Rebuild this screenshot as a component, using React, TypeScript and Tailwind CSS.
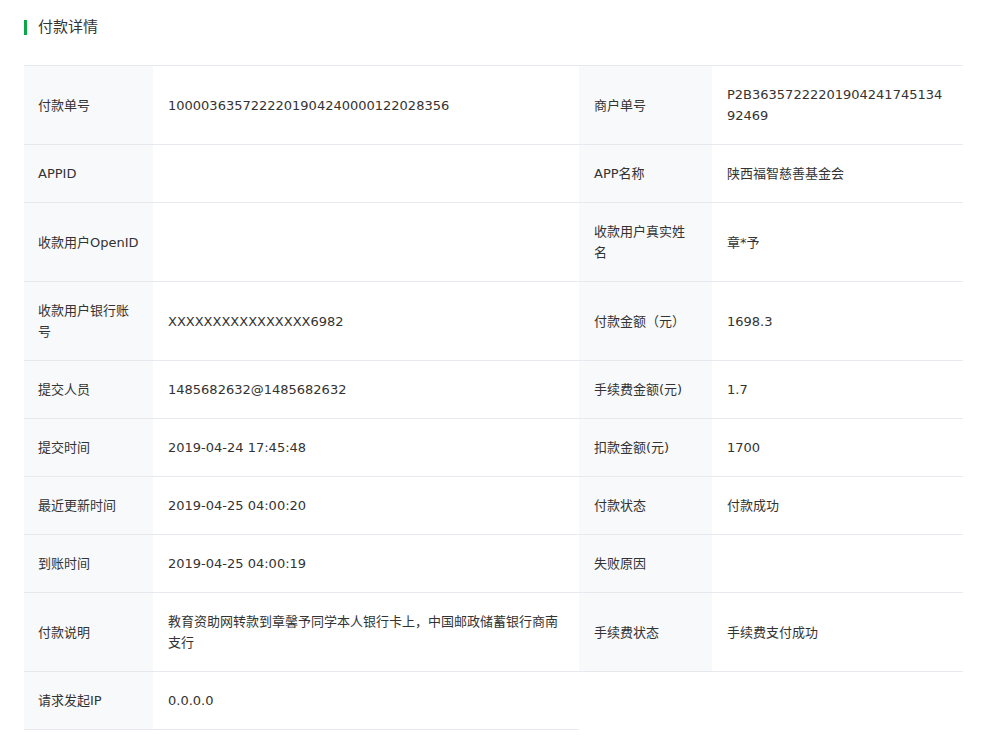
const rows: [string, string, string?, string?][] = [
  ["付款单号", "1000036357222201904240000122028356", "商户单号", "P2B3635722220190424174513492469"],
  ["APPID", "", "APP名称", "陕西福智慈善基金会"],
  ["收款用户OpenID", "", "收款用户真实姓名", "章*予"],
  ["收款用户银行账号", "XXXXXXXXXXXXXXXX6982", "付款金额（元）", "1698.3"],
  ["提交人员", "1485682632@1485682632", "手续费金额(元)", "1.7"],
  ["提交时间", "2019-04-24 17:45:48", "扣款金额(元)", "1700"],
  ["最近更新时间", "2019-04-25 04:00:20", "付款状态", "付款成功"],
  ["到账时间", "2019-04-25 04:00:19", "失败原因", ""],
  ["付款说明", "教育资助网转款到章馨予同学本人银行卡上，中国邮政储蓄银行商南支行", "手续费状态", "手续费支付成功"],
  ["请求发起IP", "0.0.0.0"],
];

export default function App() {
  return (
    <div
      className="min-h-[740px] bg-white px-[24px] pt-[17px] text-[13px] text-[#333]"
      style={{ fontFamily: '"DejaVu Sans", "Noto Sans CJK SC", sans-serif' }}
    >
      <div className="flex items-center gap-[11px]">
        <div className="h-[15px] w-[3px] bg-[#07a845]" />
        <h2 className="text-[15px] leading-[20px]">付款详情</h2>
      </div>
      <div className="mt-[28px] grid w-[939px] grid-cols-[129px_426px_133px_251px] border-t border-[#e7e9ee]">
        {rows.map((r, i) => {
          const hasRight = r[2] !== undefined;
          const cell = "flex items-center py-[18px] leading-[21px] break-all";
          return [
            <div key={i + "a"} className={`${cell} border-b border-[#e7e9ee] bg-[#f8f9fb] pl-[14px] pr-[12px]`}>{r[0]}</div>,
            <div key={i + "b"} className={`${cell} border-b border-[#e7e9ee] px-[15px]`}>{r[1]}</div>,
            <div key={i + "c"} className={`${cell} ${hasRight ? "border-b border-[#e7e9ee] bg-[#f8f9fb]" : ""} px-[15px]`}>{r[2]}</div>,
            <div key={i + "d"} className={`${cell} ${hasRight ? "border-b border-[#e7e9ee]" : ""} px-[15px]`}>{r[3]}</div>,
          ];
        })}
      </div>
    </div>
  );
}
